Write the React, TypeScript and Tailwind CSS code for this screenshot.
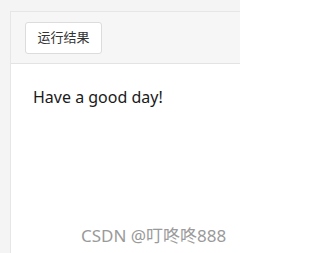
export default function App() {
  return (
    <div className="relative h-[253px] w-[240px] overflow-hidden bg-[#f4f4f4] pl-[10px] pt-[11px] font-['Noto_Sans','Noto_Sans_CJK_SC',sans-serif]">
      <div className="h-full border-l border-t border-[#e6e6e6] bg-white">
        {/* toolbar */}
        <div className="flex h-[52px] items-center border-b border-[#e3e3e3] bg-[#f6f6f6] pl-[14px]">
          <button className="h-[32px] w-[77px] rounded-[3px] border border-[#dcdcdc] bg-white text-[13px] leading-none text-[#333]">
            运行结果
          </button>
        </div>
        {/* result */}
        <div className="px-[22px] pt-[21px] text-[16px] leading-[24px] text-[#1a1a1a]">
          Have a good day!
        </div>
      </div>
      <div className="absolute left-[81px] top-[225px] text-[17px] leading-[22px] text-[#9a9a9a]">
        CSDN @叮咚咚888
      </div>
    </div>
  );
}
